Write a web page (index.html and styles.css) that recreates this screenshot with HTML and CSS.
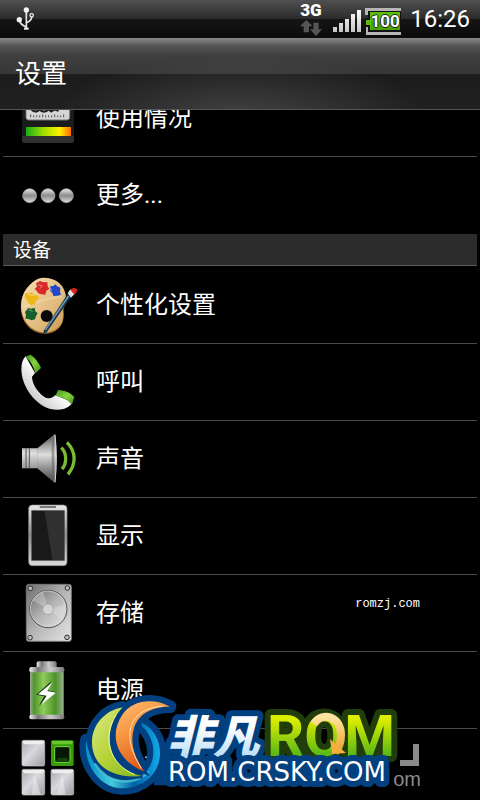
FILE: index.html
```html
<!DOCTYPE html>
<html lang="zh-CN">
<head>
<meta charset="utf-8">
<meta name="viewport" content="width=device-width, initial-scale=1">
<title>设置</title>
<link rel="stylesheet" href="styles.css">
</head>
<body>
<svg class="defs" width="0" height="0" aria-hidden="true">
  <defs>
    <linearGradient id="silver" x1="0" y1="0" x2="0" y2="1"><stop offset="0" stop-color="#e8e8e8"/><stop offset=".5" stop-color="#8c8c8c"/><stop offset="1" stop-color="#dcdcdc"/></linearGradient>
    <linearGradient id="bars" x1="0" y1="0" x2="0" y2="1"><stop offset="0" stop-color="#fff"/><stop offset="1" stop-color="#c4c4c4"/></linearGradient>
    <linearGradient id="metal" x1="0" y1="0" x2="0" y2="1"><stop offset="0" stop-color="#777"/><stop offset=".4" stop-color="#ddd"/><stop offset="1" stop-color="#555"/></linearGradient>
    <linearGradient id="plate" x1="0" y1="0" x2="1" y2="1"><stop offset="0" stop-color="#6d6d6d"/><stop offset=".5" stop-color="#b5b5b5"/><stop offset="1" stop-color="#e6e6e6"/></linearGradient>
    <linearGradient id="tile" x1="0" y1="0" x2="1" y2="1"><stop offset="0" stop-color="#a4a5ab"/><stop offset=".45" stop-color="#d8d9dd"/><stop offset="1" stop-color="#9b9ca3"/></linearGradient>
    <linearGradient id="green" x1="0" y1="0" x2="1" y2="1"><stop offset="0" stop-color="#3f9416"/><stop offset=".5" stop-color="#86d340"/><stop offset="1" stop-color="#3f8c17"/></linearGradient>
  </defs>
</svg>

<header class="status">
  <svg class="usb" viewBox="0 0 60 72" role="img" aria-label="USB">
    <g fill="none" stroke="#e8e8e8" stroke-width="5"><path d="M31 10V66M31 60C22 55 12 53 11 40M31 47C42 43 47 38 47 30"/><circle cx="47" cy="25" r="5" stroke-width="4"/></g>
    <g fill="#f2f2f2"><circle cx="31" cy="9" r="8"/><circle cx="10" cy="38" r="8"/><path d="M24 62h14v6H24z"/></g>
  </svg>
  <div class="indicators">
    <div class="network">
      <span>3G</span>
      <svg viewBox="0 0 66 48" aria-hidden="true"><path fill="#555" d="M19 0 38 19H27V37H11V19H0zM40 8h16v20h10L48 48 30 28h10z"/></svg>
    </div>
    <svg class="signal" viewBox="0 0 28 24" role="img" aria-label="信号">
      <path fill="url(#bars)" d="M0 18h4v5H0zM6 14h4v9H6zM12 10h4v13h-4zM18 5h4v18h-4zM24 1h4v22h-4z"/>
    </svg>
    <div class="charge">
      <svg viewBox="0 0 36 27" aria-hidden="true"><path fill="#b5b5b5" d="M0 0h36v27H1v-8h3v-5H0v-3h4V7H0z"/><path fill="#111" d="M3 3h33v21H3v-6H0v-8h3z"/><path fill="#5bbd06" d="M5 4h30v18H5v-5H1v-5h4z"/><path fill="#4ba204" d="M6 13h29v9H6z"/></svg>
      <span>100</span>
    </div>
    <time>16:26</time>
  </div>
</header>

<div class="title"><h1>设置</h1></div>

<main class="list">
  <ul class="group first">
    <li><a href="#usage">
      <svg viewBox="54 -42 180 192" aria-hidden="true">
        <defs><linearGradient id="heat"><stop offset="0" stop-color="#14ad16"/><stop offset=".4" stop-color="#a4de00"/><stop offset=".75" stop-color="#fff200"/><stop offset="1" stop-color="#ff6a00"/></linearGradient></defs>
        <rect x="66" y="-30" width="156" height="159" rx="10" fill="#1b1b1b"/><path d="M66 107h156v12q0 10-10 10H76q-10 0-10-10z" fill="#303030"/>
        <rect x="78" y="-10" width="131" height="70" rx="8" fill="#d5d5d5" stroke="#777" stroke-width="3"/>
        <path d="M92 52v-9m9 9v-6m9 6v-6m9 6v-6m9 6v-9m9 9v-6m9 6v-6m9 6v-6m9 6v-9m9 9v-6m9 6v-6m9 6v-9" stroke="#555" stroke-width="3"/>
        <path d="M92 25c8 12 20 12 26 3 8 9 20 9 27 0l9 6 9-6 13 4" fill="none" stroke="#222" stroke-width="7"/>
        <rect x="78" y="81" width="135" height="27" fill="url(#heat)"/>
      </svg><span>使用情况</span></a></li>
    <li><a href="#more">
      <svg viewBox="54 189 180 192" aria-hidden="true"><g fill="url(#silver)" stroke="#aaa" stroke-width="2"><circle cx="89" cy="287" r="21"/><circle cx="144" cy="287" r="21"/><circle cx="199" cy="287" r="21"/></g></svg>
      <span>更多...</span></a></li>
  </ul>
  <h2>设备</h2>
  <ul class="group">
    <li><a href="#personalize">
      <svg viewBox="54 129 180 192" aria-hidden="true">
        <defs><linearGradient id="wood" x1="0" y1="0" x2="1" y2="1"><stop offset="0" stop-color="#f6dfb3"/><stop offset=".6" stop-color="#e3bd80"/><stop offset="1" stop-color="#c9954e"/></linearGradient></defs>
        <path fill="#9c6c32" d="M130 147c40 0 68 25 70 62 1 14-10 20-9 33 1 22 0 45-24 60-22 15-60 11-82-12-30-30-28-85-4-115 14-18 32-28 49-28z"/>
        <path fill="url(#wood)" d="M130 143c40 0 66 24 67 57 0 18-13 22-9 40 4 20 3 42-20 58-25 16-60 11-82-12-29-30-29-82-5-112 14-18 31-31 49-31z"/>
        <path d="M70 230c30-5 60-25 116-30" fill="none" stroke="#f8e8c8" stroke-width="3" opacity=".6"/>
        <circle cx="140" cy="258" r="18" fill="#080808"/>
        <path fill="#d82928" d="m108 160 12-7 10 4 12-1 1 13 5 8-9 5-3 12-12-1-9-3-5-8-6-5 7-7z"/>
        <path fill="#2447c7" d="m151 169 9-1 6-5 6 6 9 4-1 11 3 10-10 3-13 1-3-9-6-6z"/>
        <path fill="#efb718" d="m77 189 12 1 7-4 5 9 14 2 1 10-8 4-2 12-14 2-7-7-5-9-6-8z"/>
        <path fill="#15602d" d="m75 246 10-12 9 2 10-3 2 11 7 6-5 8-3 10-11 3-8-4-10-1 2-10z"/>
        <path d="m114 164 13 4-8 8m32-2 5 9m-72 10 18 4m-16 42 12 5" stroke="#fff" stroke-width="3" opacity=".4" fill="none"/>
        <path fill="#173849" d="m203 192 10 9-74 107-9 3 2-10z"/><path d="m206 198-70 102" stroke="#6d9cb7" stroke-width="4"/>
        <path fill="#e0e0e0" d="m203 190 8-12 16 10-14 15z"/><path fill="#dd221d" d="m211 179 10-6 11 5-3 10-7 5z"/>
      </svg><span>个性化设置</span></a></li>
    <li><a href="#call">
      <svg viewBox="54 15 180 192" aria-hidden="true">
        <defs><linearGradient id="handset" x1="0" y1="1" x2="1" y2="0"><stop offset="0" stop-color="#aaa"/><stop offset=".5" stop-color="#f8f8f8"/><stop offset="1" stop-color="#c8c8c8"/></linearGradient></defs>
        <path fill="url(#handset)" d="M77 34C62 47 62 77 68 101c12 43 45 78 80 90 30 8 58 2 70-19l-52-22c-8 10-20 13-34 5-18-13-36-38-36-60l9-11z"/>
        <path fill="url(#green)" d="m77 35 14-6c12 7 26 24 32 40l-17 16C102 66 92 48 77 35z"/><path fill="url(#green)" d="m174 135-8 18c19 2 36 9 49 26l8-23c-12-12-28-20-49-21z"/>
      </svg><span>呼叫</span></a></li>
    <li><a href="#sound">
      <svg viewBox="54 246 180 192" aria-hidden="true">
        <path fill="url(#metal)" d="M66 310h46l53-43c6 45 6 101 0 147l-53-44H66z"/><path fill="#555" opacity=".5" d="m112 310 51-40v142l-51-42z"/><path fill="url(#metal)" d="m112 312 43-30v118l-43-31z"/>
        <path d="M78 310v61m10-61v61" stroke="#555" stroke-width="3"/><path d="M165 269c5 43 5 99 0 143" stroke="#ddd" stroke-width="3" fill="none"/>
        <path d="M184 308c17 17 17 48 2 64m15-80c28 29 28 65 3 96" fill="none" stroke="#79bd32" stroke-width="10"/>
      </svg><span>声音</span></a></li>
    <li><a href="#display">
      <svg viewBox="54 27 180 192" aria-hidden="true">
        <rect x="86" y="30" width="115" height="182" rx="11" fill="url(#silver)" stroke="#888" stroke-width="2"/><rect x="95" y="47" width="98" height="149" fill="#191919" stroke="#555" stroke-width="2"/>
        <path fill="#303030" d="M134 48h58v147h-35z"/><path d="M119 36h49" stroke="#444" stroke-width="4"/>
      </svg><span>显示</span></a></li>
    <li><a href="#storage">
      <svg viewBox="54 258 180 192" aria-hidden="true">
        <rect x="79" y="268" width="135" height="171" rx="7" fill="url(#plate)" stroke="#777" stroke-width="3"/>
        <circle cx="145" cy="342" r="56" fill="url(#plate)" stroke="#4f4f4f" stroke-width="3"/><circle cx="144" cy="341" r="53" fill="none" stroke="#ddd" stroke-width="2"/>
        <path d="M144 342 97 316a53 53 0 0 1 33-26zM144 342l50-13a50 50 0 0 1-10 43z" fill="#eee" opacity=".3"/>
        <circle cx="144" cy="343" r="16" fill="#d4d4d4" stroke="#999" stroke-width="2"/>
        <g fill="#bbb" stroke="#333" stroke-width="3"><circle cx="91" cy="280" r="7"/><circle cx="202" cy="279" r="7"/><circle cx="90" cy="428" r="7"/><circle cx="201" cy="427" r="7"/></g>
      </svg><span>存储</span></a></li>
    <li><a href="#power">
      <svg viewBox="54 24 180 192" aria-hidden="true">
        <defs><linearGradient id="cell"><stop offset="0" stop-color="#9da69a"/><stop offset=".12" stop-color="#4f962b"/><stop offset=".4" stop-color="#91cb5a"/><stop offset=".75" stop-color="#4c932b"/><stop offset=".93" stop-color="#7fab68"/><stop offset="1" stop-color="#aaa"/></linearGradient>
        <linearGradient id="cap"><stop offset="0" stop-color="#eee"/><stop offset=".25" stop-color="#777"/><stop offset=".6" stop-color="#ccc"/><stop offset="1" stop-color="#777"/></linearGradient></defs>
        <rect x="110" y="34" width="60" height="25" rx="6" fill="url(#cap)"/><rect x="90" y="64" width="101" height="136" fill="url(#cell)"/>
        <rect x="88" y="51" width="105" height="16" rx="6" fill="url(#cap)"/><rect x="88" y="194" width="105" height="14" rx="6" fill="url(#cap)"/>
        <path d="m154 94-46 40 24 5-15 28 52-40-25-6z" fill="#173d10"/><path d="m157 97-43 36 26 4-18 28 46-37-26-5z" fill="#fff"/>
      </svg><span>电源</span></a></li>
    <li><a href="#apps">
      <svg viewBox="54 255 180 192" aria-hidden="true">
        <g fill="url(#tile)" stroke="#c8c8cc" stroke-width="2"><rect x="66" y="271" width="68" height="77" rx="5"/><rect x="66" y="358" width="68" height="77" rx="5"/><rect x="153" y="358" width="68" height="77" rx="5"/></g>
        <path d="M68 273h64l-4 10H71zM68 360h64l-4 10H71zM155 360h64l-4 10h-57z" fill="#eee"/><path d="m188 370 8 64h-25zM102 370l20 64H96z" fill="#f4f4f7" opacity=".45"/>
        <rect x="153" y="271" width="68" height="77" rx="5" fill="#399a0b"/><path fill="#68c72c" d="M155 273h64l-4 10h-57z"/><rect x="164" y="290" width="46" height="47" rx="6" fill="#061705" stroke="#70dc38" stroke-width="3"/><path fill="#14460a" d="m167 334 9-10h24l8 10z"/>
      </svg><span>应用程序</span></a></li>
  </ul>
</main>

<div class="mark">romzj.com</div>

<svg class="brand" viewBox="0 0 360 110" role="img" aria-label="非凡ROM ROM.CRSKY.COM">
  <defs>
    <linearGradient id="lime" x1="0" y1="0" x2="1" y2="1"><stop offset="0" stop-color="#dce884"/><stop offset=".5" stop-color="#b6d439"/><stop offset="1" stop-color="#7eb51c"/></linearGradient>
    <linearGradient id="orange" x1="0" y1="0" x2=".5" y2="1"><stop offset="0" stop-color="#ffc078"/><stop offset=".45" stop-color="#f7953f"/><stop offset="1" stop-color="#dd5017"/></linearGradient>
    <linearGradient id="sea"><stop offset="0" stop-color="#008fd0"/><stop offset=".35" stop-color="#44c9dd"/><stop offset=".65" stop-color="#005fa5"/><stop offset="1" stop-color="#12acea"/></linearGradient>
    <linearGradient id="ice" x1="0" y1="0" x2="0" y2="1"><stop offset=".4" stop-color="#fff"/><stop offset=".85" stop-color="#b9ddf8"/></linearGradient>
    <linearGradient id="leaf" x1="0" y1="0" x2="0" y2="1"><stop offset=".25" stop-color="#dcee00"/><stop offset=".8" stop-color="#55b517"/></linearGradient>
    <linearGradient id="gold" x1="0" y1="0" x2="0" y2="1"><stop offset="0" stop-color="#ffe4a0"/><stop offset="1" stop-color="#e9a02b"/></linearGradient>
    <path id="limeShape" d="M158 52C108 60 66 102 66 157c0 65 52 110 151 101-58-13-88-45-96-91-7-45 8-85 37-115z"/>
    <path id="orangeShape" d="M300 50c-50-27-112-20-142 23-45 65-15 140 64 171-30-46-42-84-31-126 11-44 52-68 109-68z"/>
    <path id="seaShape" d="M49 150c-11 68 38 145 108 145 62 0 113-45 113-105 0-42-21-75-53-91l-3 8c24 21 36 48 36 79 0 52-38 85-92 85-57 0-99-48-109-121z"/>
  </defs>
  <g fill="#8a8a8a"><path d="M343 54h6v22h-19v-6h13z"/><text class="ghost" x="351" y="96" text-anchor="end">om</text></g>
  <g transform="scale(.33333)">
    <g fill="#034080" stroke="#034080" stroke-width="38" stroke-linejoin="round"><use href="#seaShape"/><use href="#limeShape"/><use href="#orangeShape"/></g>
    <path d="M262 170h40v34h14v82h-64z" fill="#034080"/>
    <use href="#seaShape" fill="url(#sea)"/><path d="M74 220c40 62 116 72 162 25" fill="none" stroke="#54d0dc" stroke-width="7" opacity=".7"/>
    <use href="#limeShape" fill="url(#lime)" stroke="#034080" stroke-width="14" paint-order="stroke"/><path d="M138 75c-44 71-18 148 56 179" fill="none" stroke="#e7f4a5" stroke-width="3"/>
    <use href="#orangeShape" fill="url(#orange)" stroke="#034080" stroke-width="14" paint-order="stroke"/><path d="M280 48c-99 7-133 81-66 187" fill="none" stroke="#ffe0ae" stroke-width="3"/>
  </g>
  <text class="cn outline blue" x="97" y="64" fill="url(#ice)">非凡</text>
  <text class="rom outline dark" x="197" y="66" fill="url(#leaf)">ROM</text>
  <path d="M244 34c8-13 27-8 27 11 0 8-2 13-6 17" fill="none" stroke="url(#gold)" stroke-width="8"/><path d="m260 49 16 14-14 1z" fill="#f3ae3e"/>
  <text class="domain outline blue" x="98" y="91" fill="#fff">ROM.CRSKY.COM</text>
</svg>
</body>
</html>
```

FILE: styles.css
```css
* { box-sizing: border-box; }

body {
  margin: 0;
  height: 100vh;
  display: flex;
  flex-direction: column;
  overflow: hidden;
  position: relative;
  background: #000;
  color: #fff;
  font-family: Roboto, "Noto Sans CJK SC", sans-serif;
}

.defs { position: absolute; }

.status {
  flex: none;
  height: 38px;
  padding: 0 10px 0 16px;
  display: flex;
  justify-content: space-between;
  align-items: center;
  background: linear-gradient(#505050, #2b2b2b 50%, #151515 50%, #0b0b0b);
}

.usb { width: 20px; height: 24px; }

.indicators { display: flex; align-items: center; }

.network {
  width: 22px;
  margin-right: 11px;
  font-size: 17px;
  line-height: 16px;
  font-weight: 900;
}
.network span, .network svg { display: block; }
.network svg { width: 22px; height: 16px; margin-top: 2px; }

.signal { width: 28px; height: 24px; margin: 4px 4px 0 0; }

.charge { position: relative; width: 36px; height: 27px; margin: 4px 9px 0 0; }
.charge svg { display: block; width: 100%; height: 100%; }
.charge span {
  position: absolute;
  inset: 0 0 0 4px;
  text-align: center;
  font-size: 17px;
  line-height: 27px;
  font-weight: 700;
  text-shadow: 1px 0 #222, -1px 0 #222, 0 1px #222, 0 -1px #222;
}

time { font-size: 24px; line-height: 38px; }

.title {
  flex: none;
  height: 72px;
  padding: 0 15px;
  display: flex;
  align-items: center;
  background:
    radial-gradient(ellipse at 50% 110%, #ffffff26, transparent 55%),
    linear-gradient(#888, #555 8px, #3f3f3f 18px, #363636 50%, #1c1c1c 50%, #202020);
  border-bottom: 1px solid #555;
}

h1 { margin: 0; font-size: 26px; line-height: 36px; font-weight: 400; }

.list { flex: 1; min-height: 0; overflow: hidden; padding: 0 3px; }

.group { margin: 0; padding: 0; list-style: none; }
.first { margin-top: -30px; }
.first li:last-child { border-bottom-color: #000; }

li { border-bottom: 1px solid #4a4a4a; }

li a {
  height: 76px;
  padding-left: 15px;
  display: flex;
  align-items: center;
  gap: 18px;
  color: inherit;
  text-decoration: none;
  font-size: 24px;
  line-height: 36px;
}
li svg { flex: none; width: 60px; height: 64px; }

h2 {
  margin: 0 0 1px;
  height: 32px;
  padding-left: 10px;
  font-size: 19px;
  line-height: 34px;
  font-weight: 400;
  background: #2c2c2c;
  border-bottom: 1px solid #5a5a5a;
}

.mark {
  position: absolute;
  right: 60px;
  bottom: 188px;
  font: 12px/16px "Liberation Mono", monospace;
}

.brand {
  position: absolute;
  left: 70px;
  bottom: 0;
  width: 360px;
  height: 110px;
}

.cn { font: italic 900 46px "Noto Sans CJK SC", sans-serif; }
.rom { font: 700 58px Roboto, sans-serif; }
.domain { font: 26px "DejaVu Sans", sans-serif; }
.ghost { font: 20px "Liberation Sans", sans-serif; }
.outline { stroke-width: 12px; stroke-linejoin: round; paint-order: stroke; }
.blue { stroke: #034080; }
.dark { stroke: #203d0b; }
```
